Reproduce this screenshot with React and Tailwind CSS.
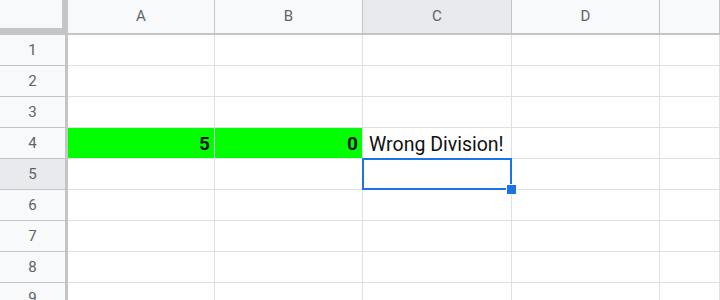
import React from "react";

const cols = [
  { l: "A", w: "w-[147px]" },
  { l: "B", w: "w-[148px]" },
  { l: "C", w: "w-[149px]" },
  { l: "D", w: "w-[148px]" },
  { l: "", w: "flex-1" },
];

function Cell({ w, children, className = "" }) {
  return (
    <div className={`${w} h-full shrink-0 border-r border-b border-[#dfe0e1] flex items-center ${className}`}>
      {children}
    </div>
  );
}

export default function App() {
  const rows = [1, 2, 3, 4, 5, 6, 7, 8, 9];
  return (
    <div className="w-[720px] h-[300px] overflow-hidden bg-white font-['Roboto',sans-serif]">
      {/* header */}
      <div className="flex h-[35px]">
        <div className="w-[68px] h-full shrink-0 bg-[#c4c5c6]">
          <div className="w-[62px] h-[28px] bg-[#f8f9fa]" />
        </div>
        {cols.map((c, i) => (
          <div
            key={i}
            className={`${c.w} h-full shrink-0 border-r border-b-2 border-[#c4c5c6] flex items-center justify-center text-[15px] text-[#5f6368] ${c.l === "C" ? "bg-[#e8eaed]" : "bg-[#f8f9fa]"}`}
          >
            {c.l}
          </div>
        ))}
      </div>
      {rows.map((r) => (
        <div key={r} className="flex h-[31px]">
          <div
            className={`w-[68px] h-full shrink-0 border-r-[3px] border-r-[#c4c5c6] border-b border-b-[#c4c5c6] flex items-center justify-center text-[15px] text-[#5f6368] ${r === 5 ? "bg-[#e8eaed]" : "bg-[#f8f9fa]"}`}
          >
            {r}
          </div>
          {cols.map((c, i) => {
            if (r === 4 && i === 0)
              return (
                <Cell key={i} w={c.w} className="bg-[#00ff00] justify-end pr-[4px] pt-[3px] text-[19px] font-bold text-[#111]">
                  5
                </Cell>
              );
            if (r === 4 && i === 1)
              return (
                <Cell key={i} w={c.w} className="bg-[#00ff00] justify-end pr-[4px] pt-[3px] text-[19px] font-bold text-[#111]">
                  0
                </Cell>
              );
            if (r === 4 && i === 2)
              return (
                <Cell key={i} w={c.w} className="pl-[6px] pt-[3px] text-[19.5px] text-[#111] whitespace-nowrap">
                  Wrong Division!
                </Cell>
              );
            if (r === 5 && i === 2)
              return (
                <Cell key={i} w={c.w} className="relative">
                  <div className="absolute -left-px -top-px -right-px -bottom-px border-2 border-[#1a73e8]" />
                  <div className="absolute -right-[6px] -bottom-[6px] w-[11px] h-[11px] bg-[#1a73e8] border border-white" />
                </Cell>
              );
            return <Cell key={i} w={c.w} />;
          })}
        </div>
      ))}
    </div>
  );
}
